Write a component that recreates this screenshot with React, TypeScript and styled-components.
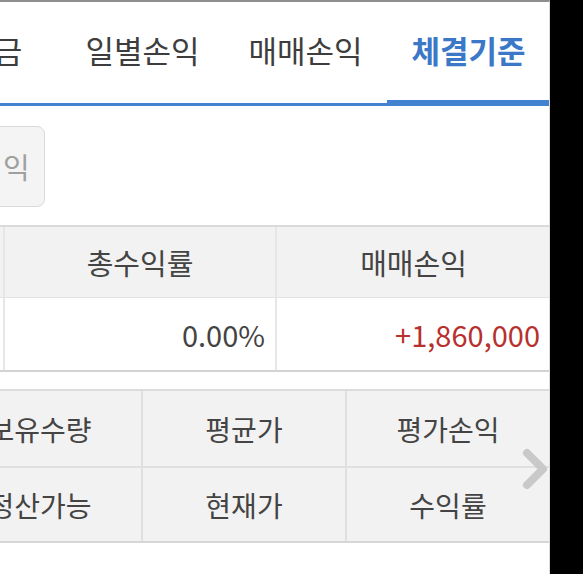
import { FC } from "react";
import styled, { createGlobalStyle } from "styled-components";

const GlobalStyle = createGlobalStyle`
  html, body {
    margin: 0;
    padding: 0;
    background: #000;
  }
  body {
    font-family: "Noto Sans CJK KR", "Noto Sans", sans-serif;
  }
  * {
    box-sizing: border-box;
  }
`;

const SPage = styled.div`
  position: relative;
  width: 550px;
  height: 574px;
  background: #fff;
  border-top: 2px solid #8e8e8e;
  border-right: 1px solid #dcdcdc;
  overflow: hidden;
`;

const STabBar = styled.div`
  display: flex;
  height: 104px;
  margin-left: -102px;
  border-bottom: 3px solid #4381d1;
`;

const STab = styled.div<{ $active?: boolean }>`
  flex: 0 0 163px;
  display: flex;
  align-items: center;
  justify-content: center;
  padding-bottom: 6px;
  font-size: 31px;
  line-height: 1;
  font-weight: ${({ $active }) => ($active ? 700 : 400)};
  color: ${({ $active }) => ($active ? "#3b78c8" : "#3d3d3d")};
  box-shadow: ${({ $active }) => ($active ? "inset 0 -3px 0 #4381d1" : "none")};
`;

const SButtonRow = styled.div`
  display: flex;
  padding-top: 20px;
`;

const SButton = styled.div`
  height: 81px;
  margin-left: -24px;
  padding: 0 14px 0 26px;
  display: flex;
  align-items: center;
  border: 1px solid #d9d9d9;
  border-radius: 8px;
  background: #f4f4f4;
  font-size: 29px;
  line-height: 1;
  color: #a0a0a0;
`;

const STable = styled.div`
  margin-top: 18px;
  border-top: 2px solid #dadada;
  border-bottom: 2px solid #d3d3d3;
`;

const STableRow = styled.div<{ $head?: boolean }>`
  display: flex;
  height: ${({ $head }) => ($head ? "71px" : "72px")};
  padding-left: 3px;
  background: ${({ $head }) => ($head ? "#f2f2f2" : "#fff")};
  border-bottom: ${({ $head }) => ($head ? "1px solid #e2e2e2" : "none")};
`;

const STableCell = styled.div<{ $align?: "center" | "right"; $red?: boolean; $width: number }>`
  flex: 0 0 ${({ $width }) => $width}px;
  display: flex;
  align-items: center;
  justify-content: ${({ $align }) => ($align === "right" ? "flex-end" : "center")};
  padding-right: ${({ $align }) => ($align === "right" ? "10px" : "0")};
  border-left: 2px solid #e6e6e6;
  font-size: 29px;
  line-height: 1;
  color: ${({ $red }) => ($red ? "#b8302e" : "#444")};
`;

const SGrid = styled.div`
  margin-top: 17px;
  margin-left: -63px;
  display: grid;
  grid-template-columns: repeat(3, 204px);
  grid-auto-rows: 75px;
  border-top: 2px solid #dcdcdc;
  border-bottom: 2px solid #d6d6d6;
  background: #f2f2f2;
`;

const SGridCell = styled.div<{ $top?: boolean }>`
  display: flex;
  align-items: center;
  justify-content: center;
  border-left: 2px solid #e0e0e0;
  border-top: ${({ $top }) => ($top ? "none" : "2px solid #e0e0e0")};
  font-size: 28px;
  line-height: 1;
  color: #444;
`;

const SChevron = styled.svg`
  position: absolute;
  left: 520px;
  top: 445px;
  width: 30px;
  height: 44px;
`;

const tabs = ["예수금", "일별손익", "매매손익", "체결기준"];
const gridItems = ["보유수량", "평균가", "평가손익", "정산가능", "현재가", "수익률"];

const App: FC = () => {
  return (
    <SPage>
      <GlobalStyle />
      <STabBar>
        {tabs.map((t) => (
          <STab key={t} $active={t === "체결기준"}>
            {t}
          </STab>
        ))}
      </STabBar>
      <SButtonRow>
        <SButton>익</SButton>
      </SButtonRow>
      <STable>
        <STableRow $head>
          <STableCell $width={272}>총수익률</STableCell>
          <STableCell $width={275}>매매손익</STableCell>
        </STableRow>
        <STableRow>
          <STableCell $width={272} $align="right">
            0.00%
          </STableCell>
          <STableCell $width={275} $align="right" $red>
            +1,860,000
          </STableCell>
        </STableRow>
      </STable>
      <SGrid>
        {gridItems.map((g, i) => (
          <SGridCell key={g} $top={i < 3}>
            {g}
          </SGridCell>
        ))}
      </SGrid>
      <SChevron viewBox="0 0 30 44">
        <path
          d="M7 6 L23 22 L7 38"
          fill="none"
          stroke="#c9c9c9"
          strokeWidth="8"
          strokeLinecap="round"
          strokeLinejoin="round"
        />
      </SChevron>
    </SPage>
  );
};

export default App;
